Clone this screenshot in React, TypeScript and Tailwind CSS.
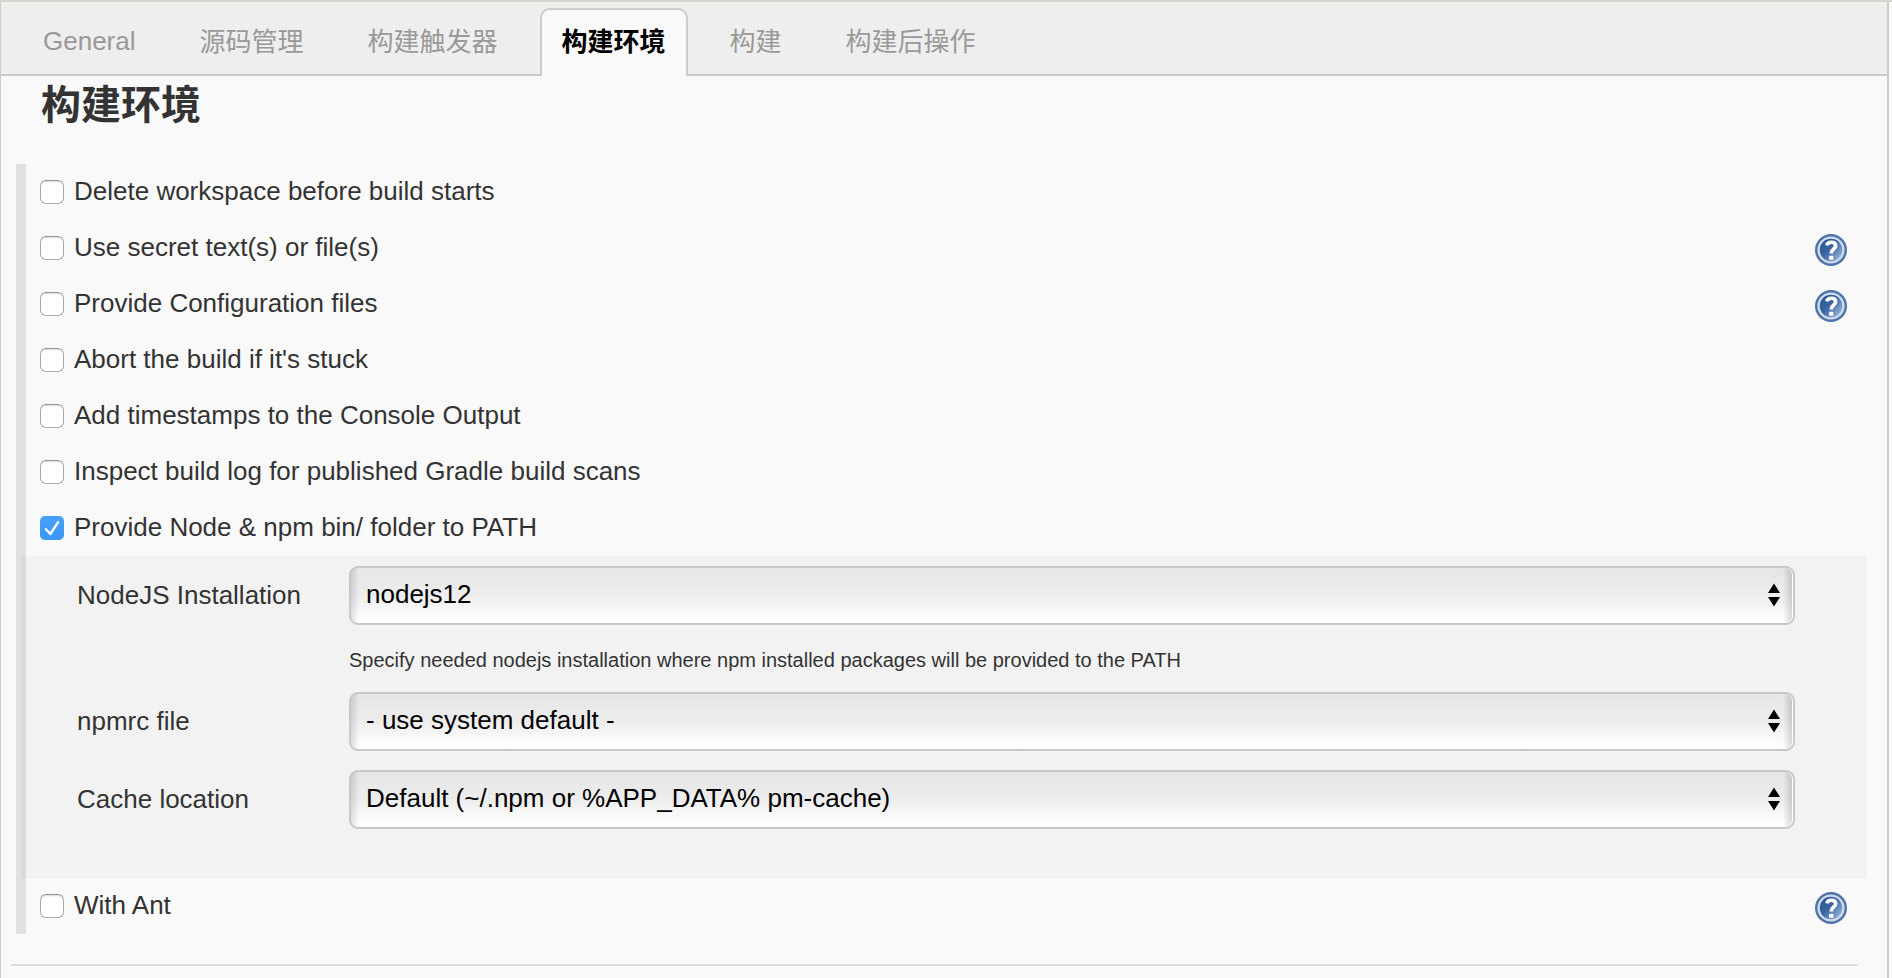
type Option = { label: string; checked?: boolean; help?: boolean };

const tabs = ["General", "源码管理", "构建触发器", "构建环境", "构建", "构建后操作"];
const activeTab = "构建环境";

const options: Option[] = [
  { label: "Delete workspace before build starts" },
  { label: "Use secret text(s) or file(s)", help: true },
  { label: "Provide Configuration files", help: true },
  { label: "Abort the build if it's stuck" },
  { label: "Add timestamps to the Console Output" },
  { label: "Inspect build log for published Gradle build scans" },
  { label: "Provide Node & npm bin/ folder to PATH", checked: true },
];

function HelpIcon() {
  return (
    <svg className="size-8 shrink-0" viewBox="0 0 32 32">
      <defs>
        <linearGradient id="helpFill" x1="0.1" y1="0.2" x2="0.9" y2="0.9">
          <stop offset="0" stopColor="#2d5795" />
          <stop offset="0.4" stopColor="#3a66a4" />
          <stop offset="1" stopColor="#93b2d8" />
        </linearGradient>
      </defs>
      <circle cx="16" cy="16" r="16" fill="#4f73a8" />
      <circle cx="16" cy="16" r="13.6" fill="#cfdbeb" />
      <circle cx="16" cy="16" r="11.2" fill="url(#helpFill)" />
      <path
        d="M11.800 11.400c.4-2.200 2-3.200 4.400-3.200 2.700 0 4.500 1.300 4.500 3.600 0 3.300-4.500 3.200-4.500 7.600"
        fill="none"
        stroke="#fff"
        strokeWidth="3.600"
      />
      <rect x="14.100" y="21.800" width="4.200" height="4" rx="0.600" fill="#fff" />
    </svg>
  );
}

function Checkbox({ checked }: { checked?: boolean }) {
  if (checked) {
    return (
      <span className="flex size-6 shrink-0 items-center justify-center rounded-[5px] bg-linear-to-b from-[#47a0fb] to-[#3b97fb]">
        <svg className="size-6" viewBox="0 0 24 24" fill="none">
          <path d="M6 13.200L10.300 18L18 6.300" stroke="#fff" strokeWidth="2.400" strokeLinecap="round" strokeLinejoin="round" />
        </svg>
      </span>
    );
  }
  return (
    <span className="size-6 shrink-0 rounded-[6px] border border-[#aaa] border-t-[#959595] bg-white shadow-[inset_0_2px_2px_-1px_rgba(0,0,0,0.16)]" />
  );
}

function OptionRow({ label, checked, help }: Option) {
  return (
    <div className="flex h-14 items-center pr-[20px] pl-[14px]">
      <Checkbox checked={checked} />
      <span className="ml-[10px] flex-1 pb-0.5 text-[26px] leading-[30px]">{label}</span>
      {help && (
        <span className="mb-[-4px] flex h-8 items-center">
          <HelpIcon />
        </span>
      )}
    </div>
  );
}

function SelectField({ label, value }: { label: string; value: string }) {
  return (
    <div className="flex items-center">
      <span className="w-[272px] shrink-0 pb-px text-[26px] leading-[30px]">{label}</span>
      <div className="flex h-[59px] w-[1446px] overflow-hidden rounded-[9px] border-2 border-[#c8c8c8] bg-linear-to-b from-[#e6e6e6] from-5% via-[#ededed] via-50% to-white to-95%">
        <span className="w-2 bg-linear-to-r from-black/12 to-transparent" />
        <span className="flex flex-1 items-center pb-[3px] pl-[7px] text-[26px] leading-[30px] text-black">{value}</span>
        <svg className="mt-[15px] h-6 w-3" viewBox="0 0 12 24">
          <path d="M6 0.500L12 10H0ZM6 23.500L12 14H0Z" fill="#000" />
        </svg>
        <span className="ml-[3px] w-[10px] rounded-r-[7px] border-r border-white bg-linear-to-l from-black/15 to-transparent" />
      </div>
    </div>
  );
}

export default function App() {
  return (
    <div className="flex h-[978px] w-[1892px] flex-col overflow-hidden border-t-2 border-[#d5d6ce] bg-[#f9f9f9] font-['Liberation_Sans','Noto_Sans_CJK_SC',sans-serif] text-[#333]">
      <main className="flex w-[1889px] flex-1 flex-col border-r-2 border-l border-[#ccc]">
        <nav className="flex h-[74px] shrink-0 items-end gap-5 border-b-2 border-[#c8c8c8] bg-[#eee] pl-[20px]">
          {tabs.map((tab) =>
            tab === activeTab ? (
              <div
                key={tab}
                className="mb-[-2px] h-[68px] rounded-t-[10px] border-2 border-b-0 border-[#ccc] bg-[#f9f9f9] px-5 pt-[14px] text-[26px] leading-9 font-bold text-black"
              >
                {tab}
              </div>
            ) : (
              <div
                key={tab}
                className="h-[66px] px-[22px] pt-[16px] text-[26px] leading-9 text-[#999] first:pt-[15px]"
              >
                {tab}
              </div>
            ),
          )}
        </nav>

        <h1 className="mt-[4px] ml-[40px] h-[84px] text-[40px] leading-[50px] font-bold">构建环境</h1>

        <section className="ml-[15px] w-[1851px] border-l-10 border-[#e0e0e0]">
          {options.map((option) => (
            <OptionRow key={option.label} {...option} />
          ))}
          <div className="ml-[-5px] flex h-[322px] flex-col bg-black/[0.027] pt-[10px] pl-[56px]">
            <SelectField label="NodeJS Installation" value="nodejs12" />
            <p className="ml-[272px] h-[67px] pt-[23px] text-[20px] leading-6">
              Specify needed nodejs installation where npm installed packages will be provided to the PATH
            </p>
            <SelectField label="npmrc file" value="- use system default -" />
            <div className="h-[19px]" />
            <SelectField label="Cache location" value="Default (~/.npm or %APP_DATA% pm-cache)" />
          </div>
          <OptionRow label="With Ant" help />
        </section>

        <hr className="mt-[30px] ml-[10px] w-[1846px] border-t-2 border-[#dcdcdc]" />
      </main>
    </div>
  );
}
